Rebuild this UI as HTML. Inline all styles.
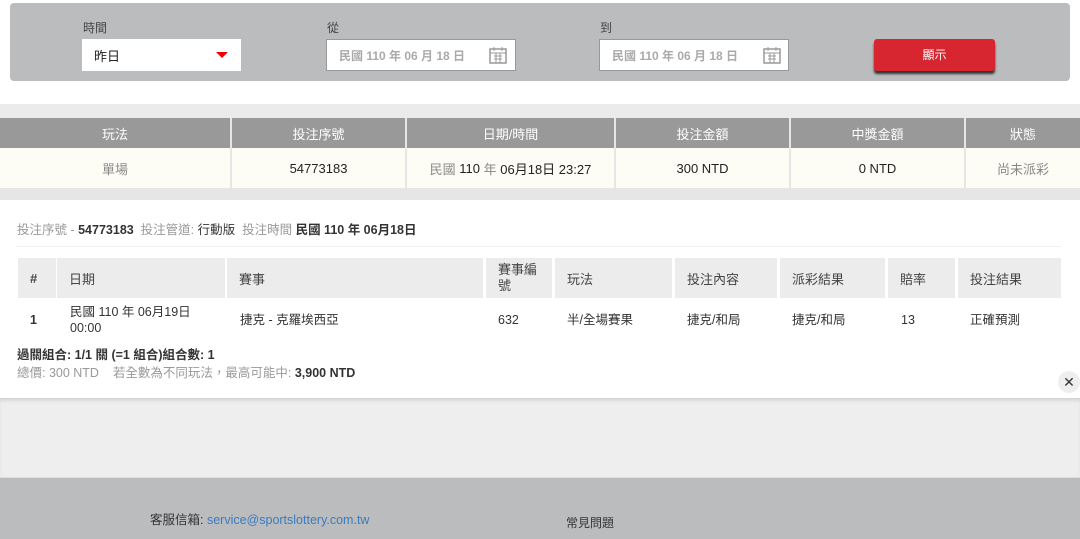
<!DOCTYPE html>
<html><head><meta charset="utf-8"><style>
*{margin:0;padding:0;box-sizing:border-box}
body{width:1080px;height:539px;overflow:hidden;background:#fff;font-family:"Liberation Sans","Noto Sans CJK TC",sans-serif;position:relative;color:#333}
.a{position:absolute}
.panel{left:10px;top:3px;width:1060px;height:78px;background:#bbbcbe;border-radius:4px}
.lbl{font-size:12px;color:#444}
.inp{background:#fff;height:32px;font-size:12px;display:flex;align-items:center;padding-left:12px}
.date{border:1px solid #999;color:#aaa;font-weight:bold}
.btn{left:874px;top:39px;width:121px;height:32px;background:#d7262f;border-radius:3px;box-shadow:0 3px 2px #333;color:#fff;font-size:12px;text-align:center;line-height:32px}
.th,.td{position:absolute;display:flex;align-items:center;justify-content:center;font-size:13px}
.th{top:118px;height:30px;background:#999;color:#fff}
.td{top:148px;height:40px;background:#fdfdf5;color:#222}
.dh{position:absolute;top:258px;height:40px;background:#ececec;font-size:13px;color:#444;display:flex;align-items:center;padding-left:12px}
.dd{position:absolute;font-size:12.5px;color:#333;top:312px;line-height:16px}
</style></head><body>
<div class="a panel"></div>
<div class="a lbl" style="left:83px;top:19px">時間</div>
<div class="a inp" style="left:82px;top:39px;width:159px;color:#222;font-size:13px">昨日</div>
<div class="a" style="left:216px;top:52px;width:0;height:0;border-left:6px solid transparent;border-right:6px solid transparent;border-top:6px solid #e00"></div>
<div class="a lbl" style="left:327px;top:19px">從</div>
<div class="a inp date" style="left:326px;top:39px;width:190px">民國 110 年 06 月 18 日</div>
<div class="a lbl" style="left:600px;top:19px">到</div>
<div class="a inp date" style="left:599px;top:39px;width:190px">民國 110 年 06 月 18 日</div>
<svg class="a" style="left:489px;top:47px" width="18" height="17"><rect x="1" y="2" width="16" height="14" fill="none" stroke="#999" stroke-width="1.5"/><path d="M1 6h16M5 9h8M5 12h8M7 6v10M11 6v10M5 0v4M13 0v4" stroke="#999"/></svg>
<svg class="a" style="left:763px;top:47px" width="18" height="17"><rect x="1" y="2" width="16" height="14" fill="none" stroke="#999" stroke-width="1.5"/><path d="M1 6h16M5 9h8M5 12h8M7 6v10M11 6v10M5 0v4M13 0v4" stroke="#999"/></svg>
<div class="a btn">顯示</div>
<div class="a" style="left:0;top:104px;width:1080px;height:14px;background:#ebebeb"></div>
<div class="a" style="left:0;top:118px;width:1080px;height:70px;background:#e6e6e6"></div>
<div class="th" style="left:0;width:230px">玩法</div>
<div class="th" style="left:232px;width:173px">投注序號</div>
<div class="th" style="left:407px;width:207px">日期/時間</div>
<div class="th" style="left:616px;width:173px">投注金額</div>
<div class="th" style="left:791px;width:173px">中獎金額</div>
<div class="th" style="left:966px;width:114px">狀態</div>
<div class="td" style="left:0;width:230px;color:#888">單場</div>
<div class="td" style="left:232px;width:173px">54773183</div>
<div class="td" style="left:407px;width:207px"><span style="color:#888">民國</span>&nbsp;110 <span style="color:#888">&nbsp;年&nbsp;</span> 06月18日 23:27</div>
<div class="td" style="left:616px;width:173px">300 NTD</div>
<div class="td" style="left:791px;width:173px">0 NTD</div>
<div class="td" style="left:966px;width:114px;color:#888">尚未派彩</div>
<div class="a" style="left:0;top:188px;width:1080px;height:12px;background:#e6e6e6"></div>
<div class="a" style="left:0;top:398px;width:1080px;height:79px;background:#eeeeee;box-shadow:inset 0 4px 4px -2px #ccc"></div>
<div class="a" style="left:0;top:477px;width:1080px;height:62px;background:#bbbcbe;border-top:1px solid #ddd"></div>
<div class="a" style="left:17px;top:219px;font-size:12.5px;color:#999">投注序號 - <b style="color:#333">54773183</b> &nbsp;投注管道: <span style="color:#333">行動版</span> &nbsp;投注時間 <b style="color:#333">民國 110 年 06月18日</b></div>
<div class="a" style="left:16px;top:246px;width:1045px;height:1px;background:#f0f0f0"></div>
<div class="dh" style="left:18px;width:38px;font-weight:bold">#</div>
<div class="dh" style="left:57px;width:168px">日期</div>
<div class="dh" style="left:227px;width:256px">賽事</div>
<div class="dh" style="left:486px;width:66px;line-height:16px">賽事編<br>號</div>
<div class="dh" style="left:555px;width:117px">玩法</div>
<div class="dh" style="left:675px;width:102px">投注內容</div>
<div class="dh" style="left:780px;width:105px">派彩結果</div>
<div class="dh" style="left:888px;width:67px">賠率</div>
<div class="dh" style="left:958px;width:103px">投注結果</div>
<div class="dd" style="left:30px;font-weight:bold">1</div>
<div class="dd" style="left:70px;top:304px">民國 110 年 06月19日<br>00:00</div>
<div class="dd" style="left:240px">捷克 - 克羅埃西亞</div>
<div class="dd" style="left:498px">632</div>
<div class="dd" style="left:567px">半/全場賽果</div>
<div class="dd" style="left:687px">捷克/和局</div>
<div class="dd" style="left:792px">捷克/和局</div>
<div class="dd" style="left:901px">13</div>
<div class="dd" style="left:970px">正確預測</div>
<div class="a" style="left:17px;top:344px;font-size:12.5px;font-weight:bold;color:#333">過關組合: 1/1 關 (=1 組合)組合數: 1</div>
<div class="a" style="left:17px;top:362px;font-size:12.5px;color:#999">總價: 300 NTD &nbsp;&nbsp;&nbsp;若全數為不同玩法，最高可能中: <b style="color:#333">3,900 NTD</b></div>
<div class="a" style="left:1058px;top:371px;width:22px;height:22px;border-radius:50%;background:#eee;font-size:14px;text-align:center;line-height:22px;color:#333">✕</div>
<div class="a" style="left:150px;top:509px;font-size:12.5px;color:#333">客服信箱: <span style="color:#3b7bbf">service@sportslottery.com.tw</span></div>
<div class="a" style="left:566px;top:514px;font-size:12px;color:#333">常見問題</div>
</body></html>
